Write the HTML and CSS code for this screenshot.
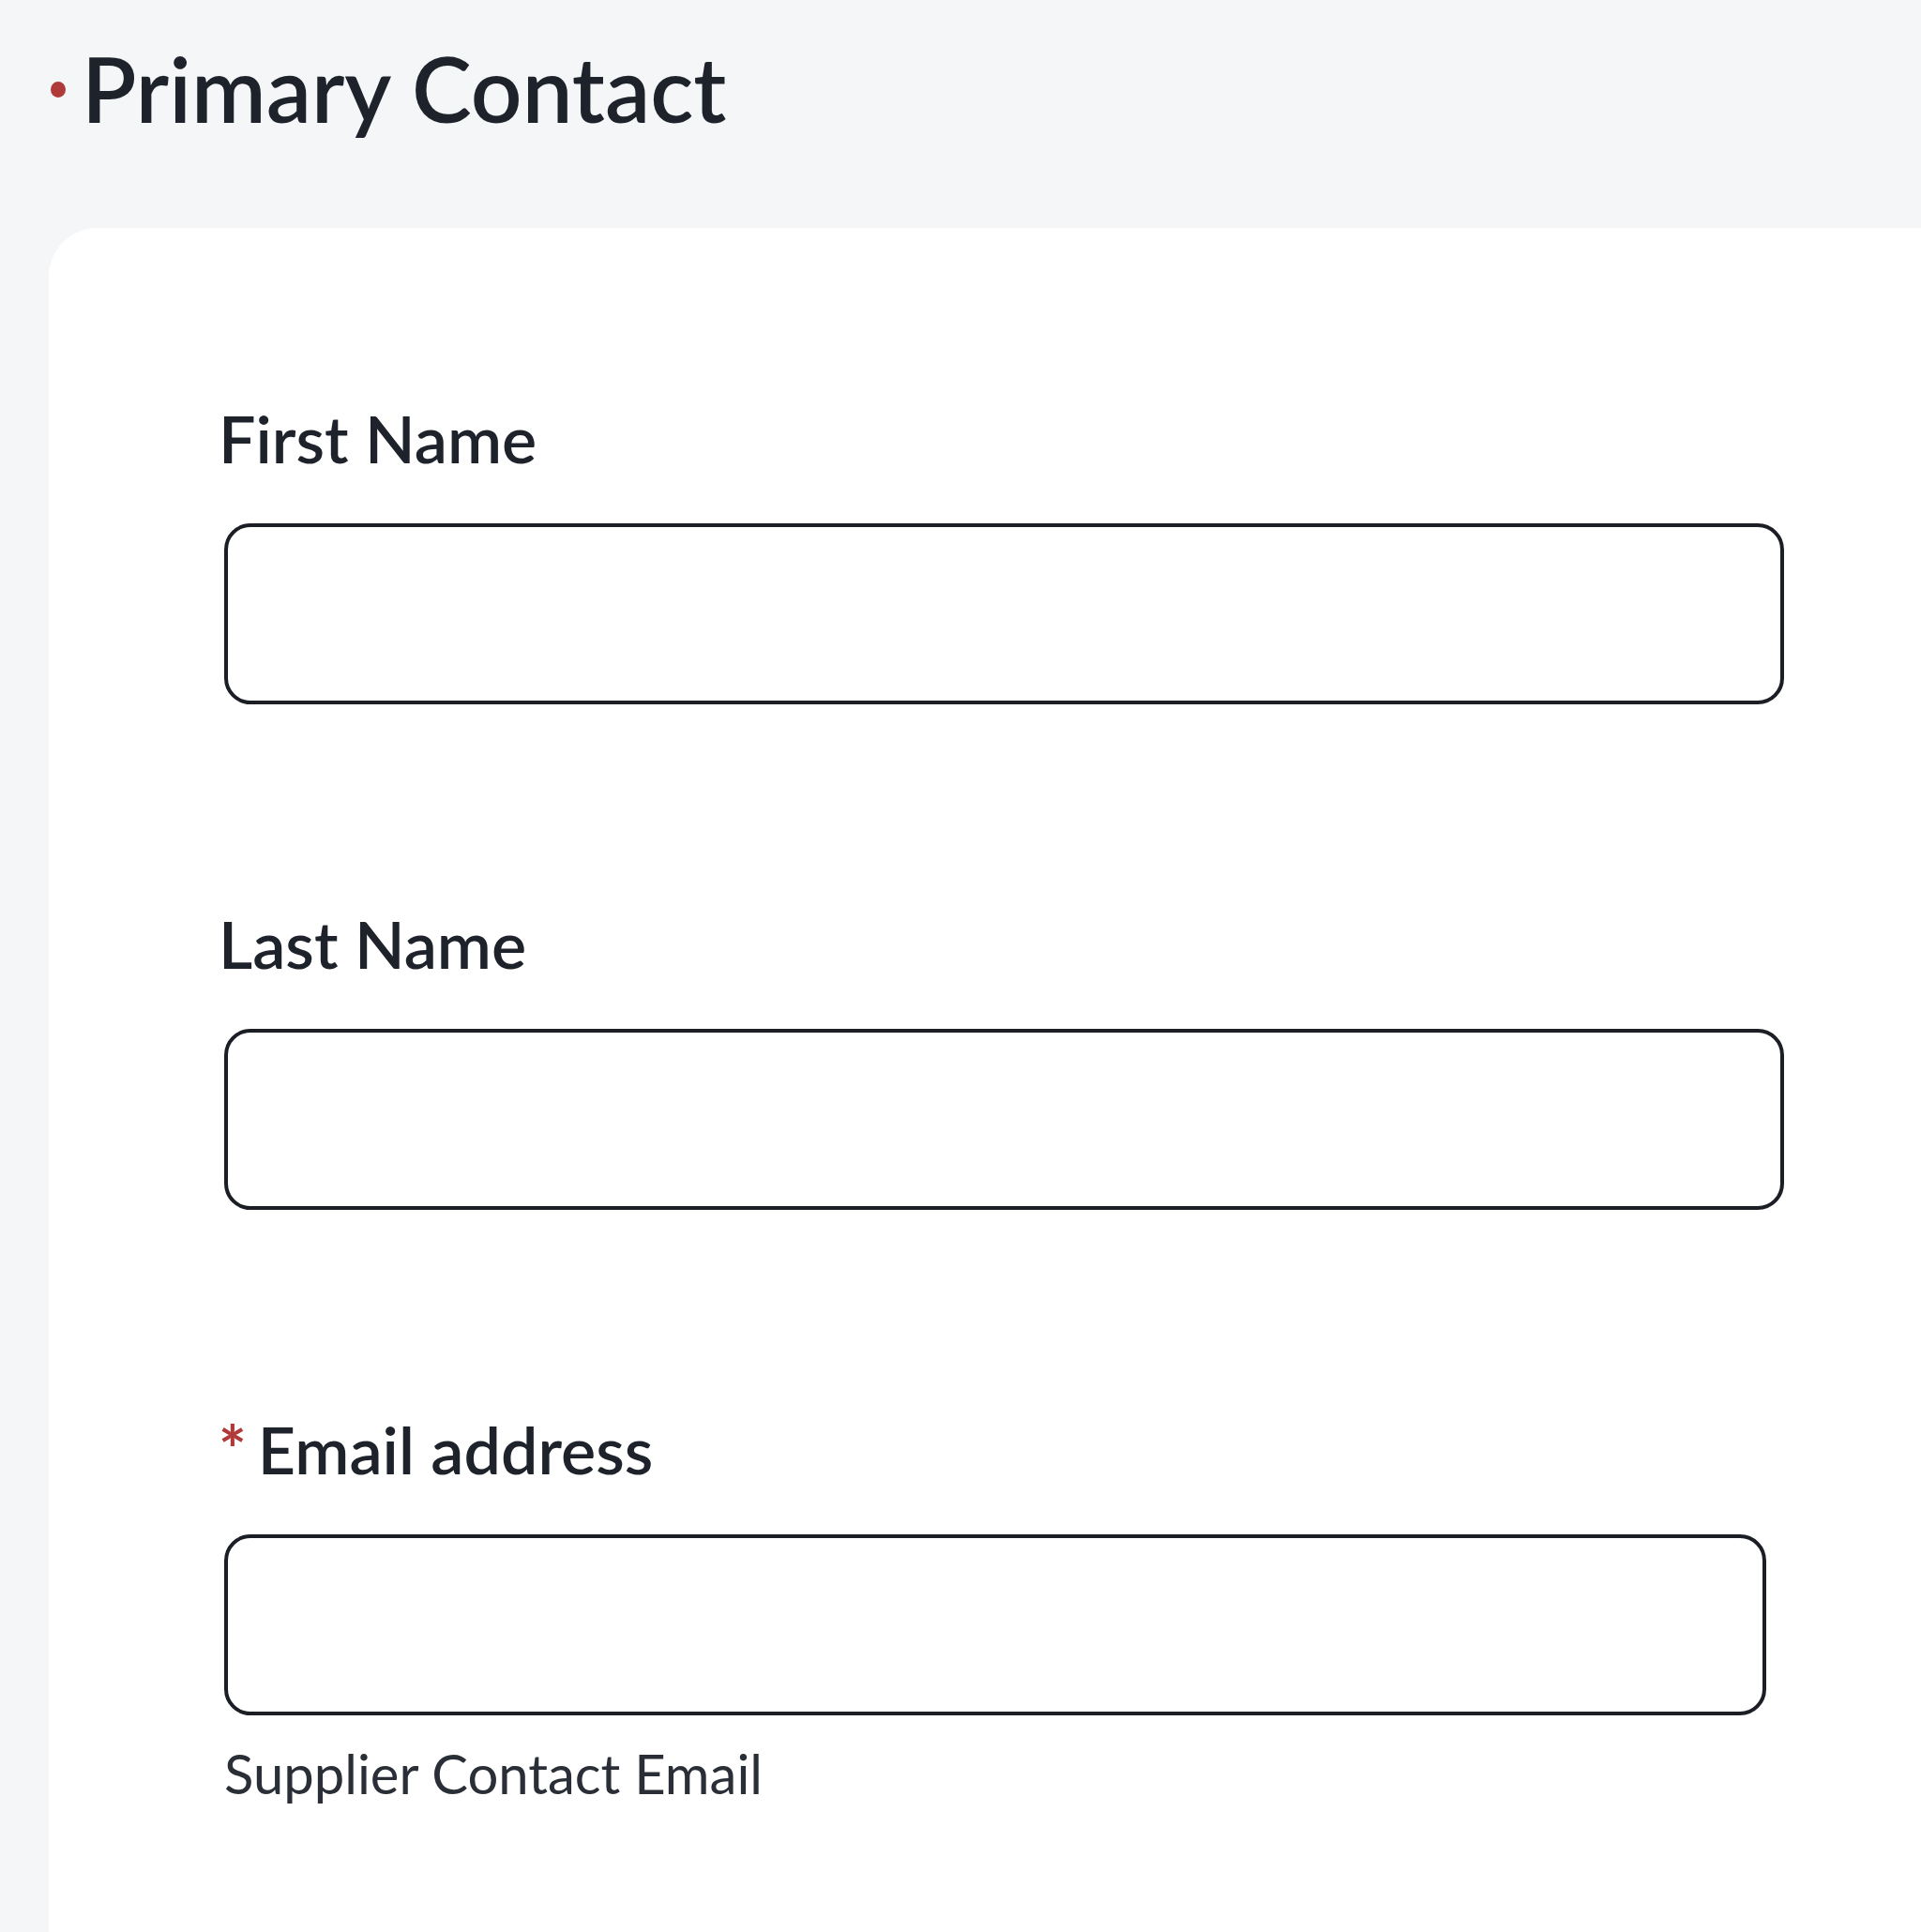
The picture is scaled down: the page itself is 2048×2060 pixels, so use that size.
FILE: index.html
```html
<!DOCTYPE html>
<html lang="en">
<head>
    <meta charset="UTF-8">
    <title>Primary Contact</title>
    <link rel="stylesheet" href="styles.css">
</head>
<body>
    <div class="section-head">
        <span class="dot"></span>
        <h1>Primary Contact</h1>
    </div>
    <div class="card">
        <div class="field">
            <label for="first-name">First Name</label>
            <input type="text" id="first-name" class="text-input">
        </div>
        <div class="field">
            <label for="last-name">Last Name</label>
            <input type="text" id="last-name" class="text-input">
        </div>
        <div class="field">
            <label for="email"><span class="req">*</span>Email address</label>
            <input type="email" id="email" class="text-input narrow">
            <div class="hint">Supplier Contact Email</div>
        </div>
    </div>
</body>
</html>
```

FILE: styles.css
```css
html, body {
    margin: 0;
    padding: 0;
}

body {
    background: #f4f6f8;
    font-family: Lato, "Open Sans", sans-serif;
    color: #1e222b;
    min-height: 2060px;
    display: flex;
    flex-direction: column;
}

.section-head {
    display: flex;
    align-items: center;
    padding: 36px 0 92px 54px;
}

.section-head .dot {
    flex-shrink: 0;
    width: 16px;
    height: 17px;
    border-radius: 50%;
    background: #b03a3a;
    margin-right: 17px;
    margin-top: 4px;
}

.section-head h1 {
    margin: 0;
    font-size: 96px;
    line-height: 1.2;
    font-weight: 600;
}

.card {
    flex: 1;
    margin-left: 52px;
    background: #fff;
    border-top-left-radius: 52px;
    padding: 182px 0 0 181px;
}

.field {
    margin-bottom: 213px;
}

.field label {
    display: block;
    font-size: 70px;
    line-height: 1.2;
    font-weight: 600;
    margin-bottom: 49px;
}

.field .req {
    color: #b03a3a;
    font-weight: 700;
    margin-right: 12px;
}

.text-input {
    display: block;
    box-sizing: border-box;
    width: 1663px;
    height: 193px;
    margin: 0 0 0 6px;
    border: 4px solid #1b1e25;
    border-radius: 28px;
    background: #fff;
    font-family: inherit;
    font-size: 60px;
    padding: 0 30px;
}

.text-input.narrow {
    width: 1644px;
}

.hint {
    margin-top: 27px;
    font-size: 58px;
    line-height: 1.2;
    color: #2a2f37;
    margin-left: 6px;
}
```
